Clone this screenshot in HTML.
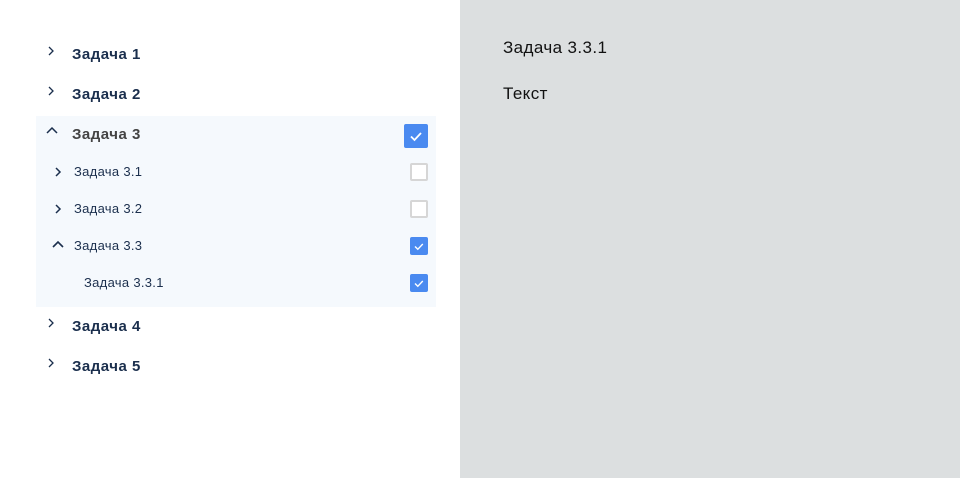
<!DOCTYPE html>
<html><head><meta charset="utf-8"><style>
body{margin:0;width:960px;height:478px;overflow:hidden;background:#fff;font-family:"Liberation Sans","DejaVu Sans",sans-serif;position:relative}
.r{position:absolute;left:460px;top:0;width:500px;height:478px;background:#dcdfe0}
.t{position:absolute;white-space:nowrap;color:#1b2f4d}
.b{font-weight:bold;font-size:15px;letter-spacing:0.5px}
.s{font-size:13px;letter-spacing:0.3px}
.bg{position:absolute;left:36px;top:116px;width:400px;height:191px;background:#f5f9fd}
svg{position:absolute}
.cb{position:absolute;box-sizing:border-box;border-radius:2px}
.on{background:#4a8af0}
.off{border:2px solid #d6d6d6;background:#fff}
</style></head><body>
<div class="bg"></div>
<svg style="left:44px;top:44px" width="14" height="14"><path d="M5 3l4 4-4 4" fill="none" stroke="#1b2f4d" stroke-width="1.3"/></svg>
<div class="t b" style="left:72px;top:46px">Задача 1</div>
<svg style="left:44px;top:84px" width="14" height="14"><path d="M5 3l4 4-4 4" fill="none" stroke="#1b2f4d" stroke-width="1.3"/></svg>
<div class="t b" style="left:72px;top:86px">Задача 2</div>
<svg style="left:44px;top:124px" width="16" height="14"><path d="M3 9l5-5 5 5" fill="none" stroke="#1b2f4d" stroke-width="1.5"/></svg>
<div class="t b" style="left:72px;top:126px;color:#444">Задача 3</div>
<div class="cb on" style="left:404px;top:124px;width:24px;height:24px"><svg style="left:0;top:0" width="24" height="24"><path d="M7 12.5l3.5 3.5 6.5-7" fill="none" stroke="#fff" stroke-width="1.8"/></svg></div>
<svg style="left:51px;top:165px" width="14" height="14"><path d="M5 3l4 4-4 4" fill="none" stroke="#1b2f4d" stroke-width="1.5"/></svg>
<div class="t s" style="left:74px;top:164px">Задача 3.1</div>
<div class="cb off" style="left:410px;top:163px;width:18px;height:18px"></div>
<svg style="left:51px;top:202px" width="14" height="14"><path d="M5 3l4 4-4 4" fill="none" stroke="#1b2f4d" stroke-width="1.5"/></svg>
<div class="t s" style="left:74px;top:201px">Задача 3.2</div>
<div class="cb off" style="left:410px;top:200px;width:18px;height:18px"></div>
<svg style="left:50px;top:238px" width="16" height="14"><path d="M3 9l5-5 5 5" fill="none" stroke="#1b2f4d" stroke-width="1.6"/></svg>
<div class="t s" style="left:74px;top:238px">Задача 3.3</div>
<div class="cb on" style="left:410px;top:237px;width:18px;height:18px"><svg style="left:0;top:0" width="18" height="18"><path d="M5 9.5l2.8 2.8 5-5.3" fill="none" stroke="#fff" stroke-width="1.4"/></svg></div>
<div class="t s" style="left:84px;top:275px">Задача 3.3.1</div>
<div class="cb on" style="left:410px;top:274px;width:18px;height:18px"><svg style="left:0;top:0" width="18" height="18"><path d="M5 9.5l2.8 2.8 5-5.3" fill="none" stroke="#fff" stroke-width="1.4"/></svg></div>
<svg style="left:44px;top:316px" width="14" height="14"><path d="M5 3l4 4-4 4" fill="none" stroke="#1b2f4d" stroke-width="1.3"/></svg>
<div class="t b" style="left:72px;top:318px">Задача 4</div>
<svg style="left:44px;top:356px" width="14" height="14"><path d="M5 3l4 4-4 4" fill="none" stroke="#1b2f4d" stroke-width="1.3"/></svg>
<div class="t b" style="left:72px;top:358px">Задача 5</div>
<div class="r"></div>
<div class="t" style="left:503px;top:38px;font-size:17px;color:#111;letter-spacing:0.4px">Задача 3.3.1</div>
<div class="t" style="left:503px;top:84px;font-size:17px;color:#111;letter-spacing:0.4px">Текст</div>
</body></html>
